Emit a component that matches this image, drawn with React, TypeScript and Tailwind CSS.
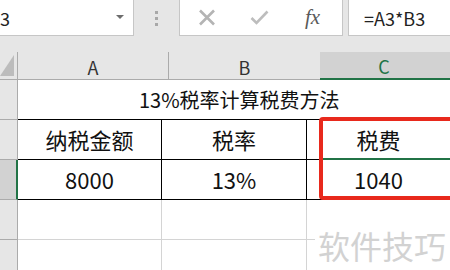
import React from "react";

const font = { fontFamily: '"Noto Sans CJK SC", "Noto Sans", sans-serif' };

function RowHead({ active }: { active?: boolean }) {
  return (
    <div
      className={
        "w-[18px] h-[40px] shrink-0 border-b border-[#ababab] " +
        (active ? "bg-[#d2d2d2] border-r-2 border-r-[#217346]" : "bg-[#e6e6e6] border-r border-r-[#ababab]")
      }
    />
  );
}

export default function App() {
  return (
    <div className="relative w-[450px] h-[270px] overflow-hidden bg-[#e6e6e6] select-none" style={font}>
      {/* formula bar */}
      <div className="flex h-[36px]">
        <div className="relative w-[134px] h-full bg-white border-r border-b border-[#c6c6c6] flex items-center">
          <span className="text-[18px] text-[#222] leading-none">3</span>
          <svg className="absolute left-[116px] top-[15px]" width="8" height="4" viewBox="0 0 8 4">
            <polygon points="0,0 8,0 4,4" fill="#6d6d6d" />
          </svg>
        </div>
        <div className="w-[45px] flex flex-col items-center justify-center gap-[3px]">
          <div className="w-[3px] h-[3px] bg-[#a8a8a8]" />
          <div className="w-[3px] h-[3px] bg-[#a8a8a8]" />
          <div className="w-[3px] h-[3px] bg-[#a8a8a8]" />
        </div>
        <div className="w-[164px] h-full bg-white border-l border-b border-r border-[#c6c6c6] flex items-center">
          <svg className="ml-[18px]" width="18" height="17" viewBox="0 0 18 17">
            <path d="M2 1.5 L16 15.5 M16 1.5 L2 15.5" stroke="#b4b4b4" strokeWidth="2.6" />
          </svg>
          <svg className="ml-[34px]" width="19" height="15" viewBox="0 0 19 15">
            <path d="M1.5 8 L6.5 13 L17.5 1.5" stroke="#bdbdbd" strokeWidth="2.6" fill="none" />
          </svg>
          <span
            className="ml-[36px] text-[21px] italic text-[#5a5a5a] leading-none"
            style={{ fontFamily: '"Liberation Serif", serif' }}
          >
            fx
          </span>
        </div>
        <div className="w-[5px]" />
        <div className="flex-1 h-full bg-white border-l border-b border-[#c6c6c6] flex items-center pl-[15px]">
          <span className="text-[18px] text-[#222] leading-none">=A3*B3</span>
        </div>
      </div>

      {/* gap */}
      <div className="h-[16px]" />

      {/* column headers */}
      <div className="flex h-[28px] text-[18px] leading-none">
        <div className="relative w-[18px] shrink-0 border-r border-b border-[#ababab]">
          <svg className="absolute left-0 top-[3px]" width="14" height="21" viewBox="0 0 14 21">
            <polygon points="0,21 14,0 14,21" fill="#bcbcbc" />
          </svg>
        </div>
        <div className="w-[151px] shrink-0 border-r border-b border-[#ababab] flex items-center justify-center pt-[2px] text-[#333]">
          A
        </div>
        <div className="w-[151px] shrink-0 border-b border-[#ababab] flex items-center justify-center pt-[2px] text-[#333]">
          B
        </div>
        <div className="flex-1 bg-[#d2d2d2] border-b-2 border-[#217346] flex items-center justify-center pt-[2px] text-[#217346] pr-[2px]">
          C
        </div>
      </div>

      {/* row 1: merged title */}
      <div className="flex">
        <RowHead />
        <div className="w-[450px] h-[40px] bg-white border-b border-black flex items-center pl-[121px] text-[20px] text-[#111]">
          13%税率计算税费方法
        </div>
      </div>

      {/* row 2: headers */}
      <div className="flex text-[22px] text-[#111]">
        <RowHead />
        <div className="w-[151px] h-[40px] bg-white border-r border-b border-black flex items-center justify-center">纳税金额</div>
        <div className="w-[152px] h-[40px] bg-white border-r border-b border-black flex items-center justify-center">税率</div>
        <div className="w-[150px] h-[40px] bg-white border-b border-black flex items-center justify-center">税费</div>
      </div>

      {/* row 3: values */}
      <div className="flex text-[22px] text-[#111]">
        <RowHead active />
        <div className="w-[151px] h-[40px] bg-white border-r border-b border-black flex items-center justify-center">8000</div>
        <div className="w-[152px] h-[40px] bg-white border-r border-b border-black flex items-center justify-center">13%</div>
        <div className="w-[150px] h-[40px] bg-white border-b border-black flex items-center justify-center">1040</div>
      </div>

      {/* rows 4-5: empty grid */}
      {[4, 5].map((n) => (
        <div className="flex" key={n}>
          <RowHead />
          <div className="w-[151px] h-[40px] bg-white border-r border-b border-[#d4d4d4]" />
          <div className="w-[152px] h-[40px] bg-white border-r border-b border-[#d4d4d4]" />
          <div className="w-[150px] h-[40px] bg-white border-b border-[#d4d4d4]" />
        </div>
      ))}

      {/* active cell top edge */}
      <div className="absolute left-[320px] top-[158px] w-[140px] h-[2px] bg-[#217346]" />

      {/* red highlight box */}
      <div className="absolute left-[319px] top-[117px] w-[150px] h-[83px] border-[4px] border-[#e8291c] rounded-[4px]" />

      {/* watermark */}
      <div className="absolute left-[315px] top-[219px] w-[140px] h-[51px] bg-white flex items-center pl-[3px] text-[32px] text-[#d2d2d2] leading-none">
        软件技巧
      </div>
    </div>
  );
}
